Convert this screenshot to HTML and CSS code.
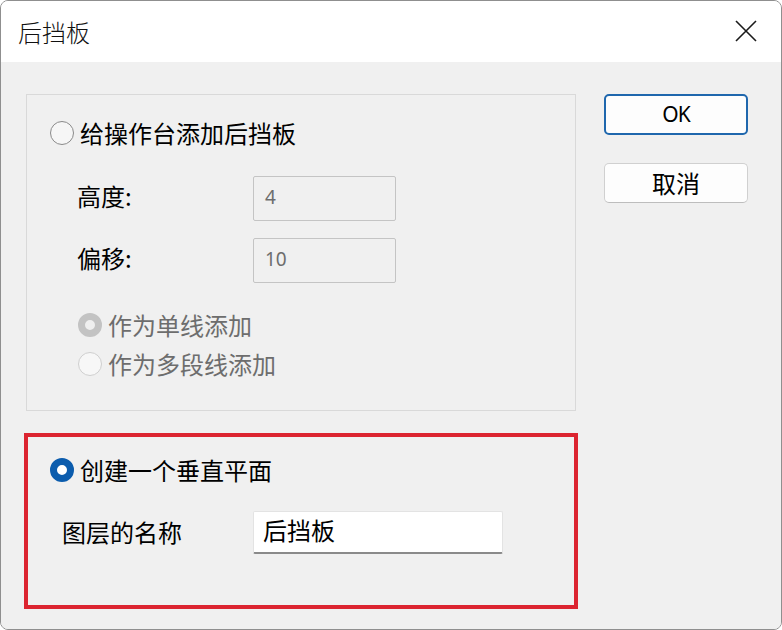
FILE: index.html
```html
<!DOCTYPE html>
<html lang="zh-CN">
<head>
<meta charset="utf-8">
<title>后挡板</title>
<link rel="stylesheet" href="styles.css">
</head>
<body>
<div class="dialog">
  <div class="titlebar">
    <span class="title">后挡板</span>
    <svg class="close" width="22" height="22" viewBox="0 0 22 22"><path d="M1 1 L21 21 M21 1 L1 21" stroke="#1a1a1a" stroke-width="1.6" fill="none"/></svg>
  </div>
  <div class="body">
    <div class="left">
      <div class="group">
        <div class="radio-row main">
          <span class="radio"></span><span class="rtext">给操作台添加后挡板</span>
        </div>
        <div class="field first">
          <span class="flabel">高度:</span>
          <span class="input disabled">4</span>
        </div>
        <div class="field second">
          <span class="flabel">偏移:</span>
          <span class="input disabled">10</span>
        </div>
        <div class="radio-row sub first-sub">
          <span class="radio dis-checked"></span><span class="rtext dim">作为单线添加</span>
        </div>
        <div class="radio-row sub second-sub">
          <span class="radio dis"></span><span class="rtext dim">作为多段线添加</span>
        </div>
      </div>
      <div class="redbox">
        <div class="radio-row main">
          <span class="radio checked"></span><span class="rtext">创建一个垂直平面</span>
        </div>
        <div class="field name">
          <span class="flabel wide">图层的名称</span>
          <span class="input active">后挡板</span>
        </div>
      </div>
    </div>
    <div class="buttons">
      <button class="btn default">OK</button>
      <button class="btn">取消</button>
    </div>
  </div>
</div>
</body>
</html>
```
FILE: styles.css
```css
* { box-sizing: border-box; }
html, body { margin: 0; padding: 0; background: #ffffff; }
body {
  font-family: "Noto Sans CJK SC", "Noto Sans", sans-serif;
  color: #000;
}
.dialog {
  width: 782px;
  height: 630px;
  border: 1px solid #8f8f8f;
  border-radius: 8px;
  overflow: hidden;
  display: flex;
  flex-direction: column;
  background: #f0f0f0;
}
.titlebar {
  height: 61px;
  background: #ffffff;
  display: flex;
  align-items: center;
  justify-content: space-between;
  padding: 0 24px 0 17px;
}
.title {
  font-size: 24px;
  line-height: 30px;
  font-weight: 300;
  color: #111;
}
.close { display: block; margin-top: -1px; }
.body {
  flex: 1;
  display: flex;
  padding: 32px 0 0 23px;
  background: #f0f0f0;
}
.left {
  width: 554px;
  display: flex;
  flex-direction: column;
}
.group {
  margin-left: 2px;
  width: 550px;
  height: 317px;
  border: 1px solid #d9d9d9;
  padding-top: 23px;
}
.radio-row {
  display: flex;
  align-items: center;
  height: 30px;
}
.radio-row.main { padding-left: 23px; }
.radio-row.sub { padding-left: 51px; }
.first-sub { margin-top: 27px; }
.second-sub { margin-top: 9px; }
.radio {
  width: 24px;
  height: 24px;
  border-radius: 50%;
  border: 1.5px solid #8a8a8a;
  background: #f6f6f6;
  flex: none;
  margin-right: 6px;
}
.radio.dis {
  border-color: #cfcfcf;
  background: #f7f7f7;
}
.radio.dis-checked {
  border: 7px solid #c3c3c3;
  background: #efefef;
}
.radio.checked {
  border: 7px solid #0b5cad;
  background: #ffffff;
}
.rtext {
  font-size: 24px;
  line-height: 30px;
  color: #000;
}
.rtext.dim { color: #6d6d6d; }
.field {
  display: flex;
  align-items: center;
  padding-left: 50px;
}
.field.first { margin-top: 28px; }
.field.second { margin-top: 17px; }
.flabel {
  width: 176px;
  font-size: 24px;
  line-height: 30px;
  padding-bottom: 5px;
}
.flabel.wide { width: 191px; padding-bottom: 2px; }
.input {
  height: 45px;
  display: flex;
  align-items: center;
  border-radius: 2px;
}
.input.disabled {
  width: 143px;
  border: 1.5px solid #c4c4c4;
  background: #f0f0f0;
  color: #6d6d6d;
  font-family: "Noto Sans", sans-serif;
  font-size: 19px;
  padding-left: 11px;
  padding-bottom: 4px;
}
.redbox {
  margin-top: 22px;
  height: 176px;
  border: 4px solid #dc2430;
  padding-top: 18px;
}
.redbox .radio-row.main { padding-left: 22px; }
.field.name {
  margin-top: 26px;
  padding-left: 34px;
}
.input.active {
  width: 250px;
  height: 43px;
  background: #ffffff;
  border: 1px solid #e3e3e3;
  border-bottom: 2px solid #8a8a8a;
  font-size: 24px;
  padding-left: 9px;
  padding-bottom: 6px;
  color: #000;
}
.buttons {
  margin-left: 26px;
  display: flex;
  flex-direction: column;
  gap: 28px;
}
.btn {
  width: 144px;
  height: 40px;
  border: 1px solid #d0d0d0;
  border-bottom-color: #bdbdbd;
  border-radius: 5px;
  background: #fdfdfd;
  font-family: "Noto Sans CJK SC", "Noto Sans", sans-serif;
  font-size: 24px;
  line-height: 1;
  color: #000;
  padding: 0;
}
.btn.default {
  height: 41px;
  border: 2px solid #1f67ad;
  font-family: "Noto Sans", sans-serif;
  font-size: 21px;
  letter-spacing: -1px;
}
```
